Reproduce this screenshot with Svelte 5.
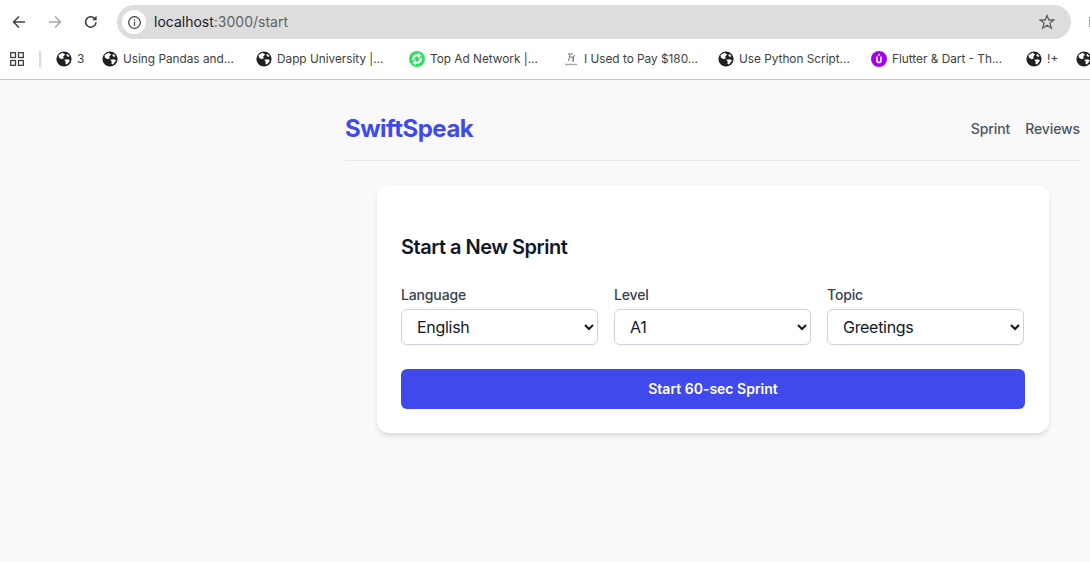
<script>
let language = $state("English");
let level = $state("A1");
let topic = $state("Greetings");

const bookmarks = [
    { icon: "globe", label: "3", width: 46 },
    { icon: "globe", label: "Using Pandas and...", width: 154 },
    { icon: "globe", label: "Dapp University |...", width: 153 },
    { icon: "green", label: "Top Ad Network |...", width: 154 },
    { icon: "scribble", label: "I Used to Pay $180...", width: 155 },
    { icon: "globe", label: "Use Python Script...", width: 153 },
    { icon: "purple", label: "Flutter & Dart - Th...", width: 155 },
    { icon: "globe", label: "!+", width: 50 },
    { icon: "globe", label: "", width: 16 }
];
</script>

{#snippet favicon(kind)}
    {#if kind === "globe"}
        <svg class="fav" viewBox="0 0 16 16">
            <circle cx="8" cy="8" r="7.6" fill="#202124" />
            <path d="M2.6 4 6.5 1.8 9.2 3.6 7.2 5.6 7.8 7.2 5.6 8.2 2.8 6.6Z" fill="#fff" />
            <path d="M8.2 8.8 12 8.2 14 9.4 11 13.6 9.4 12.8 9.8 10.8Z" fill="#fff" />
            <path d="M11 2.8 13.6 5 12 6 10.4 4.6Z" fill="#fff" />
        </svg>
    {:else if kind === "green"}
        <svg class="fav" viewBox="0 0 16 16">
            <circle cx="8" cy="8" r="8" fill="#2fe05c" />
            <path d="M3.4 9.6A5 5 0 0 1 9 3.2V1.4L12.4 4.4 9 7.4V5.4A3 3 0 0 0 5.4 8.4Z" fill="#fff" />
            <path d="M12.6 6.4A5 5 0 0 1 7 12.8V14.6L3.6 11.6 7 8.6V10.6A3 3 0 0 0 10.6 7.6Z" fill="#fff" />
        </svg>
    {:else if kind === "scribble"}
        <svg class="fav" viewBox="0 0 16 16" fill="none" stroke="#777" stroke-width="1">
            <path d="M5 3H10M7 3 5.5 10M7 6H10.5V10.5L8.5 9M11.5 4 9.5 8" />
            <path d="M2 13.5H14" stroke="#aaa" stroke-width="1.4" />
        </svg>
    {:else}
        <svg class="fav" viewBox="0 0 16 16">
            <circle cx="8" cy="8" r="8" fill="#a100ee" />
            <path d="M5.2 5.6V9.4A2.8 2.8 0 0 0 10.8 9.4V5.6H9.2V9.4A1.2 1.2 0 0 1 6.8 9.4V5.6Z" fill="#fff" />
            <path d="M6.6 4.4 8 2.6 9.4 4.4Z" fill="#fff" />
        </svg>
    {/if}
{/snippet}

<div class="browser">
    <div class="toolbar">
        <button class="nav back" aria-label="Back">
            <svg viewBox="0 0 16 16" fill="none" stroke="#3c4043" stroke-width="1.5"><path d="M14 8H2.5M8 2.5 2.5 8 8 13.5" /></svg>
        </button>
        <button class="nav forward" aria-label="Forward">
            <svg viewBox="0 0 16 16" fill="none" stroke="#a6a8ab" stroke-width="1.5"><path d="M2 8H13.5M8 2.5 13.5 8 8 13.5" /></svg>
        </button>
        <button class="nav reload" aria-label="Reload">
            <svg viewBox="0 0 16 16" fill="none" stroke="#3c4043" stroke-width="1.6">
                <path d="M13 8.2A5.2 5.2 0 1 1 11.4 4.2L13 5.6" />
                <path d="M13.6 1.8V6.2H9.2Z" fill="#3c4043" stroke="none" />
            </svg>
        </button>
        <div class="omnibox">
            <span class="site-info">
                <svg viewBox="0 0 16 16" fill="none" stroke="#3c4043" stroke-width="1.3">
                    <circle cx="8" cy="8" r="6.2" />
                    <path d="M8 7V11.4M8 4.4V5.8" />
                </svg>
            </span>
            <span class="url">localhost<span class="url-dim">:3000/start</span></span>
            <svg class="star" viewBox="0 0 16 16" fill="none" stroke="#5f6368" stroke-width="1.3">
                <path d="M8 1.4 9.9 6H14.9L10.9 9.1 12.3 14.2 8 11.3 3.7 14.2 5.1 9.1 1.1 6H6.1Z" />
            </svg>
        </div>
        <span class="extension"></span>
    </div>

    <div class="bookmarks">
        <svg class="apps" viewBox="0 0 14 14" fill="none" stroke="#3c4043" stroke-width="1.3">
            <rect x="0.7" y="0.7" width="4.8" height="4.8" />
            <rect x="8.5" y="0.7" width="4.8" height="4.8" />
            <rect x="0.7" y="8.5" width="4.8" height="4.8" />
            <rect x="8.5" y="8.5" width="4.8" height="4.8" />
        </svg>
        <span class="divider"></span>
        {#each bookmarks as b}
            <span class="bookmark" style="width: {b.width}px">
                {@render favicon(b.icon)}
                {#if b.label}<span>{b.label}</span>{/if}
            </span>
        {/each}
    </div>
</div>

<div class="page">
    <div class="container">
        <header class="site-header">
            <span class="logo">SwiftSpeak</span>
            <nav class="site-nav">
                <a href="#sprint">Sprint</a>
                <a href="#reviews">Reviews</a>
            </nav>
        </header>

        <main class="card">
            <h2>Start a New Sprint</h2>
            <div class="fields">
                <label>
                    Language
                    <select bind:value={language}>
                        <option>English</option>
                        <option>Spanish</option>
                    </select>
                </label>
                <label>
                    Level
                    <select bind:value={level}>
                        <option>A1</option>
                        <option>A2</option>
                    </select>
                </label>
                <label>
                    Topic
                    <select bind:value={topic}>
                        <option>Greetings</option>
                        <option>Travel</option>
                    </select>
                </label>
            </div>
            <button class="start">Start 60-sec Sprint</button>
        </main>
    </div>
</div>

<style>
:global(body) {
    margin: 0;
    height: 562px;
    overflow: hidden;
    background: #f9f9f9;
    font-family: Inter, "Liberation Sans", sans-serif;
}

.browser {
    background: #fff;
    height: 80px;
    box-sizing: border-box;
    border-bottom: 1px solid #c8c8c8;
    overflow: hidden;
}

.toolbar {
    display: flex;
    align-items: center;
    height: 34px;
    padding: 5px 0 0 11px;
}

.nav {
    border: none;
    background: none;
    padding: 0;
    width: 16px;
    height: 16px;
    display: block;
}

.nav svg {
    display: block;
    width: 16px;
    height: 16px;
}

.forward { margin-left: 20px; }
.reload { margin-left: 20px; }

.omnibox {
    display: flex;
    align-items: center;
    margin-left: 18px;
    width: 954px;
    height: 34px;
    border-radius: 17px;
    background: #dddddd;
    box-sizing: border-box;
    padding-left: 5px;
    flex-shrink: 0;
}

.site-info {
    display: flex;
    align-items: center;
    justify-content: center;
    width: 24px;
    height: 24px;
    border-radius: 50%;
    background: #fff;
}

.site-info svg {
    width: 15px;
    height: 15px;
}

.url {
    margin-left: 8px;
    padding-bottom: 2px;
    font-size: 14px;
    color: #202124;
    flex: 1;
}

.url-dim { color: #5f6368; }

.star {
    width: 16px;
    height: 16px;
    margin-right: 16px;
}

.extension {
    width: 2px;
    height: 10px;
    margin-left: 18px;
    background: #6db3e8;
    flex-shrink: 0;
}

.bookmarks {
    display: flex;
    align-items: center;
    height: 39px;
    padding-left: 10px;
    white-space: nowrap;
}

.apps {
    width: 14px;
    height: 14px;
    flex-shrink: 0;
}

.divider {
    width: 2px;
    height: 16px;
    margin: 0 15px 0 15px;
    background: #f0cfe0;
    flex-shrink: 0;
}

.bookmark {
    display: inline-flex;
    align-items: center;
    gap: 5px;
    font-size: 11.8px;
    color: #3c4043;
    flex-shrink: 0;
}

.fav {
    width: 16px;
    height: 16px;
    flex-shrink: 0;
}

.page {
    height: 482px;
    overflow: hidden;
}

.container {
    margin-left: 345px;
    width: 736px;
}

.site-header {
    display: flex;
    justify-content: space-between;
    align-items: center;
    height: 81px;
    padding-top: 17px;
    box-sizing: border-box;
    border-bottom: 1px solid #e5e7eb;
}

.logo {
    font-size: 24px;
    font-weight: 700;
    letter-spacing: -0.5px;
    color: #4049ec;
}

.site-nav {
    display: flex;
    gap: 15px;
    padding-right: 1px;
}

.site-nav a {
    font-size: 14px;
    font-weight: 500;
    letter-spacing: -0.1px;
    color: #4b5563;
    text-decoration: none;
}

.card {
    box-sizing: border-box;
    width: 672px;
    margin: 24px 0 0 32px;
    padding: 48px 24px 24px;
    background: #fff;
    border-radius: 12px;
    box-shadow: 0 4px 6px -1px rgba(0,0,0,0.1), 0 2px 4px -2px rgba(0,0,0,0.1);
}

h2 {
    margin: 0 0 24px;
    font-size: 20px;
    line-height: 28px;
    font-weight: 600;
    letter-spacing: -0.5px;
    color: #111827;
}

.fields {
    display: grid;
    grid-template-columns: repeat(3, 197px);
    gap: 16px;
}

label {
    display: flex;
    flex-direction: column;
    gap: 4px;
    font-size: 14px;
    line-height: 20px;
    font-weight: 500;
    letter-spacing: -0.15px;
    color: #374151;
}

select {
    width: 100%;
    height: 36px;
    padding: 0 11px;
    font-family: inherit;
    font-size: 16px;
    letter-spacing: -0.3px;
    color: #111827;
    background: #fff;
    border: 1px solid #d1d5db;
    border-radius: 6px;
    box-shadow: 0 1px 2px rgba(0,0,0,0.05);
}

.start {
    display: block;
    width: 624px;
    height: 40px;
    margin-top: 24px;
    padding: 0 0 2px;
    border: none;
    border-radius: 6px;
    background: #4049ec;
    color: #fff;
    font-family: inherit;
    font-size: 14px;
    font-weight: 600;
}
</style>
